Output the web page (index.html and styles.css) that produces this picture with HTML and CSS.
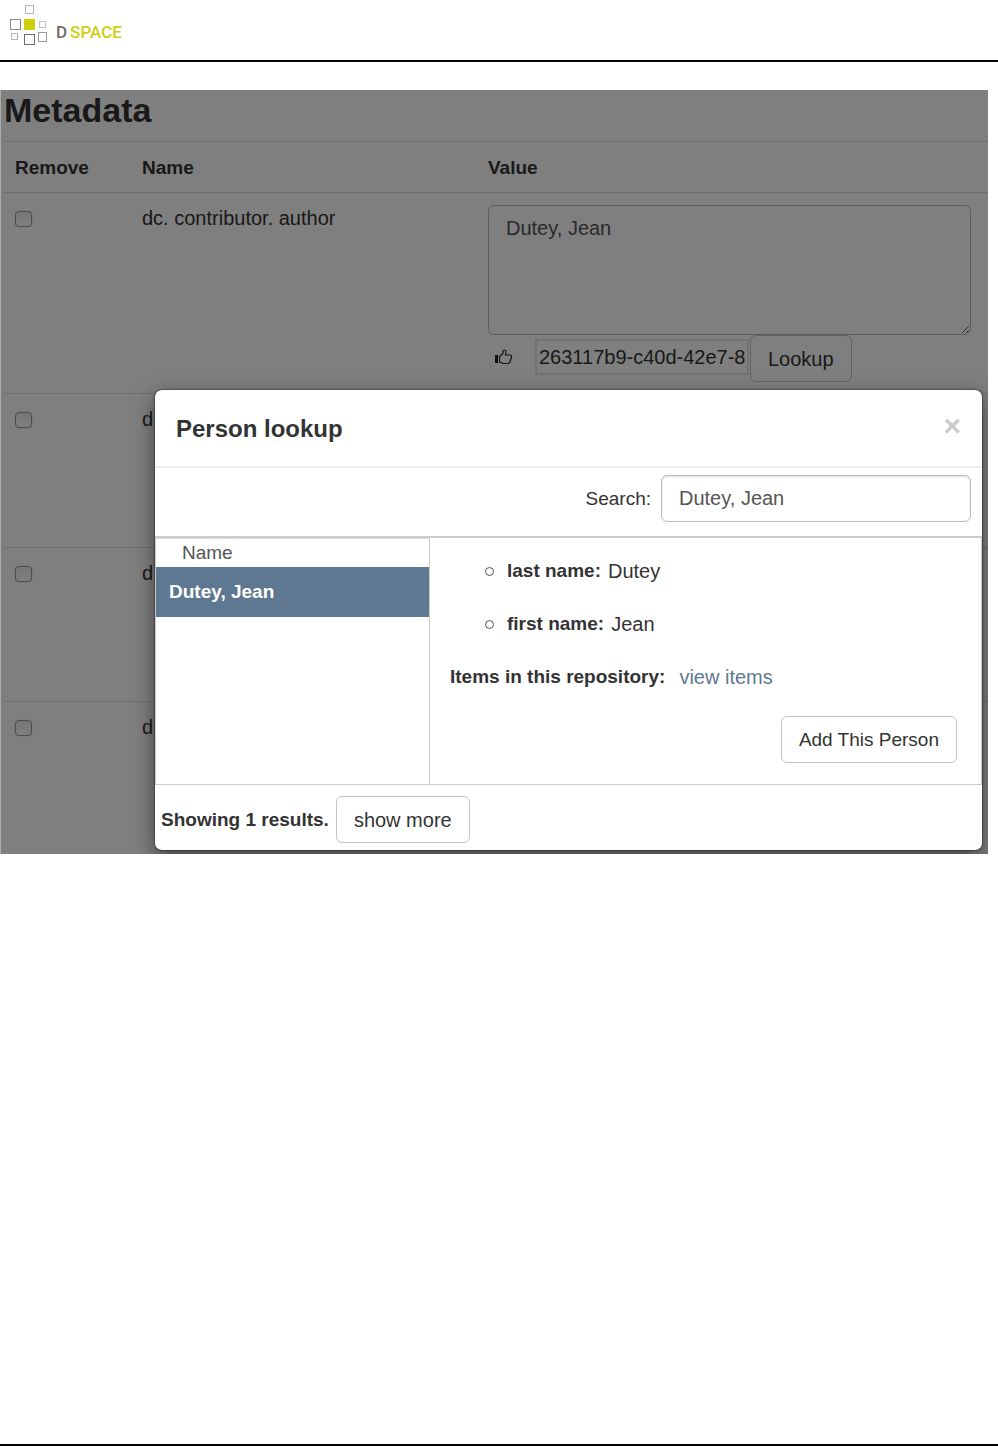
FILE: index.html
```html
<!DOCTYPE html>
<html lang="en">
<head>
<meta charset="utf-8">
<meta name="viewport" content="width=device-width, initial-scale=1">
<title>DSpace – Person lookup</title>
<link rel="stylesheet" href="styles.css">
</head>
<body>
<header class="site-header">
  <svg class="logo-mark" width="38" height="40" viewBox="0 0 38 40" fill="none" aria-hidden="true">
    <rect x="15.5" y=".5" width="8" height="8" stroke="#b5b5b5"/>
    <rect x=".5" y="14.5" width="10" height="10" stroke="#8a8a8a"/>
    <rect x="14" y="14" width="11" height="11" fill="#cdd00f"/>
    <rect x="29.500" y="16.500" width="6" height="6" stroke="#c4c4c4"/>
    <rect x="1.500" y="28.500" width="6" height="6" stroke="#b5b5b5"/>
    <rect x="14.500" y="29.500" width="10" height="10" stroke="#6c6c6c"/>
    <rect x="28.500" y="27.500" width="8" height="9" stroke="#9a9a9a"/>
  </svg>
  <div class="logo-text"><span class="logo-d">D</span><span>SPACE</span></div>
</header>

<main class="panel">
  <h1 class="panel-title">Metadata</h1>
  <table class="metadata">
    <thead>
      <tr><th class="col-remove">Remove</th><th class="col-name">Name</th><th>Value</th></tr>
    </thead>
    <tbody>
      <tr>
        <td><input class="check" type="checkbox" aria-label="Remove dc.contributor.author"></td>
        <td>dc. contributor. author</td>
        <td class="value-cell">
          <textarea class="field value-box" aria-label="Value">Dutey, Jean</textarea>
          <div class="authority">
            <svg class="thumb" width="18" height="16" viewBox="0 0 18 16" fill="none" aria-hidden="true">
              <path d="M0 6h3v8H0z" fill="#222"/>
              <path d="M4.500 13V7.500L8 4.500V2.500Q8 1 9.500 1 11 1 11 3L10.500 6H15q2 0 1.500 2L15 12.500q-.5 2-2 2H8z" stroke="#222" stroke-width="1.200" stroke-linejoin="round"/>
            </svg>
            <input class="authority-id" type="text" value="263117b9-c40d-42e7-8" aria-label="Authority key">
            <button class="btn" type="button">Lookup</button>
          </div>
        </td>
      </tr>
      <tr class="row-tall"><td><input class="check" type="checkbox" aria-label="Remove"></td><td>d</td><td></td></tr>
      <tr class="row-tall"><td><input class="check" type="checkbox" aria-label="Remove"></td><td>d</td><td></td></tr>
      <tr class="row-last"><td><input class="check" type="checkbox" aria-label="Remove"></td><td>d</td><td></td></tr>
    </tbody>
  </table>
  <div class="backdrop"></div>

  <section class="modal" role="dialog" aria-labelledby="modal-title">
    <div class="modal-header">
      <h2 class="modal-title" id="modal-title">Person lookup</h2>
      <button class="close" type="button" aria-label="Close">×</button>
    </div>
    <div class="search-row">
      <label for="search">Search:</label>
      <input class="field search" id="search" type="text" value="Dutey, Jean">
    </div>
    <div class="modal-body">
      <div class="results">
        <div class="results-head">Name</div>
        <button class="result" type="button">Dutey, Jean</button>
      </div>
      <div class="details">
        <ul class="facts">
          <li><b>last name:</b> <span>Dutey</span></li>
          <li><b>first name:</b> <span>Jean</span></li>
        </ul>
        <div class="items"><b>Items in this repository:</b><a href="#items">view items</a></div>
        <button class="btn add" type="button">Add This Person</button>
      </div>
    </div>
    <div class="modal-footer">
      <b>Showing 1 results.</b>
      <button class="btn" type="button">show more</button>
    </div>
  </section>
</main>
</body>
</html>
```

FILE: styles.css
```css
* { box-sizing: border-box; }

body {
  margin: 0;
  min-height: 100vh;
  background: #fff;
  border-bottom: 2px solid #000;
  color: #333;
  font: 20px/28px "Liberation Sans", Arial, sans-serif;
}

input, textarea, button { font: inherit; color: inherit; }
h1, h2, ul { margin: 0; padding: 0; }
b, th { font-size: 19px; font-weight: bold; }

.site-header {
  display: flex;
  gap: 8px;
  height: 62px;
  padding: 5px 10px;
  border-bottom: 2px solid #000;
}
.logo-text {
  display: flex;
  gap: 3px;
  padding-top: 13px;
  color: #cdd00f;
  font: 500 17px/28px Roboto, sans-serif;
}
.logo-d { color: #6c6c6c; }

.panel {
  position: relative;
  overflow: hidden;
  margin: 28px 10px 0 0;
  padding-left: 3px;
  border-left: 1px solid #aaa;
}
.panel-title {
  height: 51px;
  font-size: 34px;
  line-height: 40px;
}

.metadata {
  width: 100%;
  border-collapse: collapse;
  table-layout: fixed;
}
.metadata th, .metadata td {
  padding: 11px;
  border-top: 1px solid #ddd;
  text-align: left;
  vertical-align: top;
}
.metadata th { padding: 12px 11px 10px; }
.col-remove { width: 127px; }
.col-name { width: 346px; }
.metadata .value-cell { padding: 12px 17px 11px 11px; }
.row-tall { height: 154px; }
.row-last { height: 152px; }

.check {
  display: block;
  width: 17px;
  height: 16px;
  margin: 7px 0;
  appearance: none;
  border: 1px solid #999;
  border-radius: 4px;
  background: linear-gradient(#ededed, #fff);
  box-shadow: 0 0 1px #999;
}

.field {
  border: 1px solid #bbb;
  border-radius: 6px;
  background: #fff;
  color: #555;
  padding: 8px 17px;
}
.value-box {
  display: block;
  width: 100%;
  height: 130px;
  resize: vertical;
}
.authority {
  display: flex;
  align-items: center;
  padding-left: 7px;
}
.thumb { margin: 0 22px 3px 0; }
.authority-id {
  width: 214px;
  height: 36px;
  margin: 0 1px 3px 0;
  padding: 0 2px;
  border: 2px solid #e4e4e4;
  background: #fff;
}

.btn {
  height: 47px;
  padding: 0 17px;
  border: 1px solid #c4c4c4;
  border-radius: 6px;
  background: #fff;
}

.backdrop {
  position: absolute;
  inset: 0;
  background: rgba(0, 0, 0, .5);
}

.modal {
  position: absolute;
  top: 300px;
  left: 154px;
  right: 6px;
  background: #fff;
  border-radius: 7px;
  box-shadow: 0 0 1px 1px rgba(0, 0, 0, .3), 0 7px 21px rgba(0, 0, 0, .5);
}
.modal-header {
  display: flex;
  justify-content: space-between;
  height: 78px;
  padding: 24px 21px;
  border-bottom: 2px solid #eee;
}
.modal-title { font-size: 24px; line-height: 30px; }
.close {
  height: 24px;
  padding: 0;
  border: 0;
  background: none;
  color: #ccc;
  font-size: 30px;
  font-weight: bold;
  line-height: 24px;
}

.search-row {
  display: flex;
  justify-content: flex-end;
  gap: 10px;
  padding: 7px 11px 14px;
  font-size: 19px;
  line-height: 47px;
}
.search {
  width: 310px;
  height: 47px;
  font-size: 20px;
  line-height: 28px;
  box-shadow: inset 0 1px 2px #ddd;
}

.modal-body {
  display: flex;
  border: 1px solid #ccc;
  border-top-width: 2px;
}
.results {
  flex: 0 0 274px;
  border-right: 1px solid #ccc;
}
.results-head {
  padding: 0 26px;
  border-top: 1px solid #ddd;
  color: #555;
  font-size: 19px;
}
.result {
  display: block;
  width: 100%;
  height: 50px;
  padding: 0 13px;
  border: 0;
  background: #5f7891;
  color: #fff;
  font-size: 19px;
  font-weight: bold;
  text-align: left;
}
.details {
  flex: 1;
  padding: 19px 24px 21px 20px;
}
.facts { padding-left: 35px; list-style: none; }
.facts li {
  display: flex;
  align-items: center;
  gap: 7px;
  margin-bottom: 25px;
}
.facts li::before {
  content: "";
  width: 7px;
  height: 7px;
  margin-right: 6px;
  border: 1px solid #555;
  border-radius: 50%;
}
.items { display: flex; gap: 14px; }
.items a { color: #5f7891; text-decoration: none; }
.add {
  display: block;
  margin: 25px 0 0 auto;
  font-size: 19px;
}

.modal-footer {
  display: flex;
  align-items: center;
  gap: 7px;
  padding: 11px 6px 7px;
}
```
